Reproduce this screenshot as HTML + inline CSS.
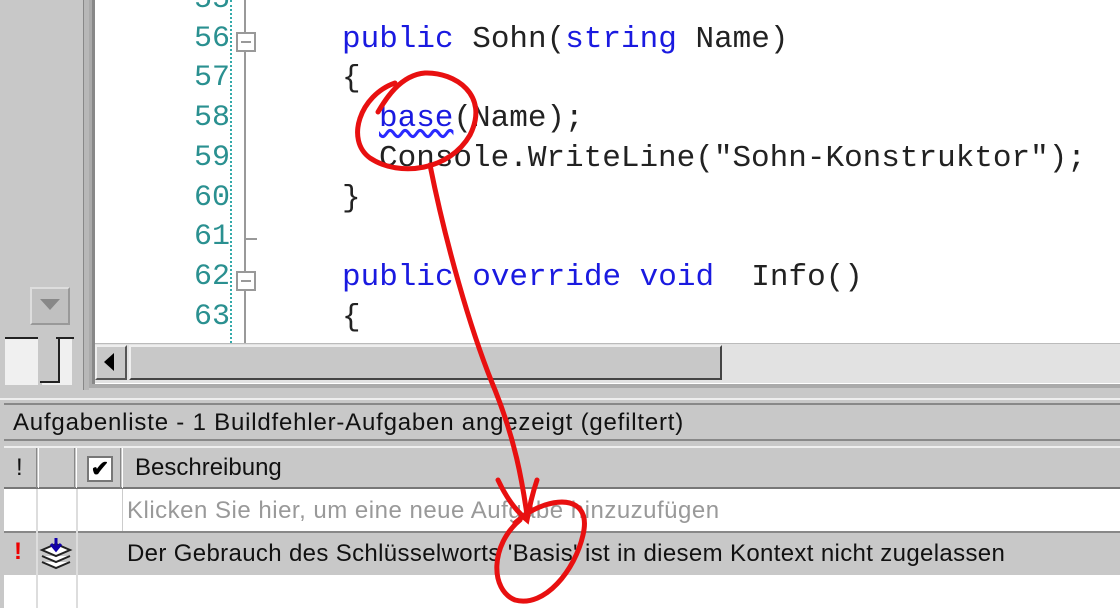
<!DOCTYPE html>
<html><head><style>
body{margin:0;width:1120px;height:608px;overflow:hidden;background:#c8c8c8;position:relative;font-family:"Liberation Sans",sans-serif}
div{position:absolute;box-sizing:border-box}
.ln{left:186px;width:44px;text-align:right;font:30px "Liberation Mono",monospace;color:#2a9090}
.cd{left:342px;font:31px "Liberation Mono",monospace;color:#222;white-space:pre;letter-spacing:0px}
.k{color:#1a1ae0}
.t{font-size:24px;color:#111;white-space:nowrap}
</style></head><body>
<div style="left:0;top:0;width:88px;height:390px;background:#c8c8c8"></div>
<div style="left:83px;top:0;width:6px;height:390px;background:#b8b8b8;border-left:1px solid #888"></div>
<div style="left:30px;top:287px;width:40px;height:38px;background:#c0c0c0;border:2px solid #ddd;border-right-color:#999;border-bottom-color:#999"></div>
<div style="left:40px;top:299px;width:0;height:0;border-left:10px solid transparent;border-right:10px solid transparent;border-top:11px solid #888"></div>
<div style="left:5px;top:337px;width:33px;height:48px;background:#f0f0f0;border-top:2px solid #222"></div>
<div style="left:42px;top:337px;width:30px;height:48px;background:#f0f0f0"></div>
<div style="left:40px;top:337px;width:20px;height:46px;border-right:2px solid #222;border-bottom:2px solid #222;background:#c8c8c8;left:40px"></div>
<div style="left:56px;top:337px;width:18px;height:2px;background:#222"></div>
<div style="left:89px;top:0;width:1031px;height:388px;background:#aaa"></div>
<div style="left:92px;top:0;width:1028px;height:384px;background:#fff;border-left:3px solid #888"></div>
<div style="left:230px;top:0;width:0;height:343px;border-left:2px dotted #3aa"></div>
<div style="left:244px;top:0;width:2px;height:343px;background:#999"></div>
<div style="left:246px;top:238px;width:11px;height:2px;background:#999"></div>
<div style="left:236px;top:32px;width:20px;height:20px;background:#fff;border:2px solid #999"></div><div style="left:241px;top:41px;width:10px;height:2px;background:#999"></div>
<div style="left:236px;top:271px;width:20px;height:20px;background:#fff;border:2px solid #999"></div><div style="left:241px;top:280px;width:10px;height:2px;background:#999"></div>
<div class="ln" style="top:-17px">55</div>
<div class="ln" style="top:22px">56</div><div class="ln" style="top:61px">57</div><div class="ln" style="top:101px">58</div><div class="ln" style="top:141px">59</div><div class="ln" style="top:181px">60</div><div class="ln" style="top:220px">61</div><div class="ln" style="top:260px">62</div><div class="ln" style="top:300px">63</div>
<div class="cd" style="top:22px"><span class="k">public</span> Sohn(<span class="k">string</span> Name)</div>
<div class="cd" style="top:61px">{</div>
<div class="cd" style="top:101px;left:379px"><span class="k" style="text-decoration:underline wavy #2a2aff;text-underline-offset:3px">base</span>(Name);</div>
<div class="cd" style="top:141px;left:379px">Console.WriteLine("Sohn-Konstruktor");</div>
<div class="cd" style="top:181px">}</div>
<div class="cd" style="top:260px"><span class="k">public override void</span>  Info()</div>
<div class="cd" style="top:300px">{</div>
<div style="left:95px;top:343px;width:1025px;height:40px;background:#e2e2e2;border-top:1px solid #bbb"></div>
<div style="left:95px;top:345px;width:32px;height:35px;background:#c8c8c8;border:2px solid #eee;border-right-color:#555;border-bottom-color:#555"></div>
<div style="left:104px;top:353px;width:0;height:0;border-top:9px solid transparent;border-bottom:9px solid transparent;border-right:10px solid #000"></div>
<div style="left:129px;top:345px;width:593px;height:35px;background:#c8c8c8;border:2px solid #eee;border-right-color:#444;border-bottom-color:#444"></div>
<div style="left:0;top:398px;width:1120px;height:2px;background:#eee"></div>
<div style="left:4px;top:403px;width:1116px;height:38px;background:#c8c8c8;border-top:2px solid #888;border-bottom:2px solid #888"></div>
<div class="t" style="left:13px;top:409px;letter-spacing:0.8px">Aufgabenliste - 1 Buildfehler-Aufgaben angezeigt (gefiltert)</div>
<div style="left:4px;top:446px;width:1116px;height:43px;background:#c8c8c8;border-top:2px solid #eee;border-bottom:2px solid #777"></div>
<div style="left:36px;top:448px;width:3px;height:40px;border-left:1px solid #888;border-right:1px solid #fff"></div>
<div style="left:74px;top:448px;width:3px;height:40px;border-left:1px solid #888;border-right:1px solid #fff"></div>
<div style="left:120px;top:448px;width:3px;height:40px;border-left:1px solid #888;border-right:1px solid #fff"></div>
<div class="t" style="left:16px;top:454px">!</div>
<div style="left:87px;top:456px;width:26px;height:26px;background:#fff;border:2px solid #777;font-size:22px;line-height:22px;text-align:center;font-weight:bold">✔</div>
<div class="t" style="left:135px;top:454px">Beschreibung</div>
<div style="left:4px;top:489px;width:1116px;height:42px;background:#fff"></div>
<div style="left:122px;top:489px;width:1px;height:119px;background:#ccc"></div>
<div class="t" style="left:127px;top:497px;color:#999;letter-spacing:0.5px">Klicken Sie hier, um eine neue Aufgabe hinzuzufügen</div>
<div style="left:4px;top:531px;width:1116px;height:44px;background:#c8c8c8;border-top:2px solid #888"></div>
<div style="left:4px;top:575px;width:1116px;height:33px;background:#fff"></div>
<div style="left:36px;top:489px;width:2px;height:119px;background:#ddd"></div>
<div style="left:76px;top:489px;width:2px;height:119px;background:#ddd"></div>
<div class="t" style="left:14px;top:538px;color:#e00;font-weight:bold;font-size:24px">!</div>
<svg style="position:absolute;left:38px;top:536px" width="36" height="36"><path d="M4 14 L18 8 L32 14 L18 20Z M4 20 L18 26 L32 20 M4 26 L18 32 L32 26" fill="#fff" stroke="#222" stroke-width="2"/><path d="M18 2 V13 M13 8 L18 14 L23 8" stroke="#10a" stroke-width="3" fill="none"/></svg>
<div class="t" style="left:127px;top:540px;letter-spacing:0.35px">Der Gebrauch des Schlüsselworts 'Basis' ist in diesem Kontext nicht zugelassen</div>
<svg style="position:absolute;left:0;top:0" width="1120" height="608"><g fill="none" stroke="#e81010" stroke-width="5" stroke-linecap="round">
<path d="M395 83 C360 95 345 140 370 158 C400 178 450 170 470 135 C490 95 455 72 425 73 C400 75 385 100 378 112"/>
<path d="M430 165 C445 240 470 330 495 390 C515 440 522 480 527 515"/>
<path d="M498 480 C505 495 515 510 527 520 C530 505 532 495 537 480"/>
<path d="M520 520 C490 545 490 590 515 600 C545 608 575 570 583 535 C590 505 570 497 545 505 C530 510 522 517 515 523"/>
</g></svg>
</body></html>
